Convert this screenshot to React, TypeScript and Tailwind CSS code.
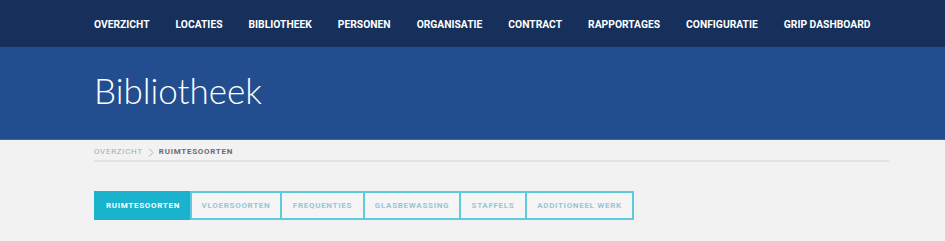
import React from 'react';

const navItems = [
  'Overzicht',
  'Locaties',
  'Bibliotheek',
  'Personen',
  'Organisatie',
  'Contract',
  'Rapportages',
  'Configuratie',
  'Grip dashboard',
];

const tabs = [
  { label: 'Ruimtesoorten', w: 'w-[98px]' },
  { label: 'Vloersoorten', w: 'w-[92px]' },
  { label: 'Frequenties', w: 'w-[85px]' },
  { label: 'Glasbewassing', w: 'w-[98px]' },
  { label: 'Staffels', w: 'w-[68px]' },
  { label: 'Additioneel werk', w: 'w-[109px]' },
];

function App() {
  return (
    <div className="min-h-[241px] bg-[#f2f2f2] font-['Roboto',sans-serif]">
      {/* top navigation */}
      <nav className="h-[47px] bg-[#16305b] pt-[3px]">
        <ul className="flex h-full items-center gap-[26px] pl-[94px]">
          {navItems.map((item) => (
            <li key={item} className="text-[10.3px] font-bold uppercase leading-none text-white">
              {item}
            </li>
          ))}
        </ul>
      </nav>

      {/* page header */}
      <header className="h-[93px] border-b border-[#3a67a6] bg-[#224e8f]">
        <h1 className="pl-[94px] pt-[22px] font-['Lato',sans-serif] text-[35px] font-light leading-[42px] text-white">
          Bibliotheek
        </h1>
      </header>

      <div className="mx-[94px] mr-[56px]">
        {/* breadcrumb */}
        <div className="flex h-[22px] items-center gap-[5px] border-b-2 border-[#e2e2e2] pt-[4px] text-[8px] uppercase tracking-[0.7px]">
          <span className="text-[#ababab]">Overzicht</span>
          <svg width="6" height="9" viewBox="0 0 6 9" className="text-[#b5b5b5]">
            <path d="M1 0.5 L5 4.5 L1 8.5" fill="none" stroke="currentColor" strokeWidth="1" />
          </svg>
          <span className="font-bold text-[#6b6b6b]">Ruimtesoorten</span>
        </div>

        {/* tabs */}
        <div className="mt-[29px] flex">
          {tabs.map((tab, i) => (
            <div
              key={tab.label}
              className={
                (i === 0
                  ? 'bg-[#1bb2ce] text-white border-[#1bb2ce] '
                  : 'bg-[#f5f5f5] text-[#95c6d8] border-[#5ccbe0] ') +
                (i > 0 ? '-ml-[2px] ' : '') +
                tab.w +
                ' flex h-[29px] items-center justify-center border-2 text-[8px] font-bold uppercase tracking-[0.7px]'
              }
            >
              {tab.label}
            </div>
          ))}
        </div>
      </div>
    </div>
  );
}

export default App;
